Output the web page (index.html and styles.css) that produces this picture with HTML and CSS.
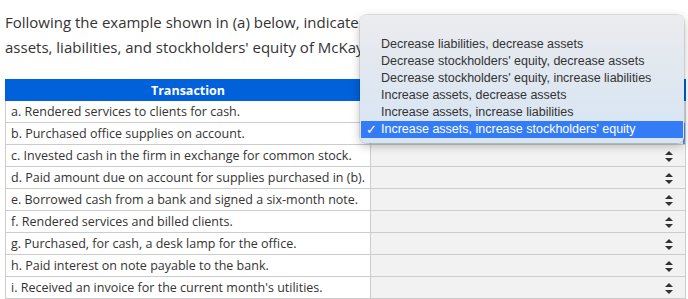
FILE: index.html
```html
<!DOCTYPE html>
<html>
<head>
<meta charset="utf-8">
<link rel="stylesheet" href="styles.css">
</head>
<body>
<div class="page">
  <p class="intro">Following the example shown in (a) below, indicate the effects of the listed transactions on the<br>assets, liabilities, and stockholders' equity of McKay Company.</p>
  <table class="grid">
    <thead>
      <tr><th class="col-t">Transaction</th><th class="col-e"></th></tr>
    </thead>
    <tbody>
      <tr><td>a. Rendered services to clients for cash.</td><td class="sel"><svg class="arr" viewBox="0 0 8 11"><path d="M4 0L8 4H0Z M0 7H8L4 11Z"/></svg></td></tr>
      <tr><td>b. Purchased office supplies on account.</td><td class="sel focus"><svg class="arr" viewBox="0 0 8 11"><path d="M4 0L8 4H0Z M0 7H8L4 11Z"/></svg></td></tr>
      <tr><td>c. Invested cash in the firm in exchange for common stock.</td><td class="sel"><svg class="arr" viewBox="0 0 8 11"><path d="M4 0L8 4H0Z M0 7H8L4 11Z"/></svg></td></tr>
      <tr><td>d. Paid amount due on account for supplies purchased in (b).</td><td class="sel"><svg class="arr" viewBox="0 0 8 11"><path d="M4 0L8 4H0Z M0 7H8L4 11Z"/></svg></td></tr>
      <tr><td>e. Borrowed cash from a bank and signed a six-month note.</td><td class="sel"><svg class="arr" viewBox="0 0 8 11"><path d="M4 0L8 4H0Z M0 7H8L4 11Z"/></svg></td></tr>
      <tr><td>f. Rendered services and billed clients.</td><td class="sel"><svg class="arr" viewBox="0 0 8 11"><path d="M4 0L8 4H0Z M0 7H8L4 11Z"/></svg></td></tr>
      <tr><td>g. Purchased, for cash, a desk lamp for the office.</td><td class="sel"><svg class="arr" viewBox="0 0 8 11"><path d="M4 0L8 4H0Z M0 7H8L4 11Z"/></svg></td></tr>
      <tr><td>h. Paid interest on note payable to the bank.</td><td class="sel"><svg class="arr" viewBox="0 0 8 11"><path d="M4 0L8 4H0Z M0 7H8L4 11Z"/></svg></td></tr>
      <tr><td>i. Received an invoice for the current month's utilities.</td><td class="sel"><svg class="arr" viewBox="0 0 8 11"><path d="M4 0L8 4H0Z M0 7H8L4 11Z"/></svg></td></tr>
    </tbody>
  </table>
  <ul class="popup">
    <li>Decrease liabilities, decrease assets</li>
    <li>Decrease stockholders' equity, decrease assets</li>
    <li>Decrease stockholders' equity, increase liabilities</li>
    <li>Increase assets, decrease assets</li>
    <li>Increase assets, increase liabilities</li>
    <li class="chosen"><span class="check">✓</span>Increase assets, increase stockholders' equity</li>
  </ul>
</div>
</body>
</html>
```
FILE: styles.css
```css
html, body {
  margin: 0;
  padding: 0;
  background: #ffffff;
}
.page {
  position: relative;
  width: 688px;
  height: 299px;
  overflow: hidden;
  padding: 0 3px 0 5px;
  box-sizing: border-box;
  font-family: "Open Sans", sans-serif;
  color: #333333;
}
.intro {
  margin: 0;
  padding-top: 10px;
  width: 683px;
  font-size: 15px;
  line-height: 25px;
  height: 79px;
  box-sizing: border-box;
  white-space: nowrap;
  overflow: hidden;
}
.grid {
  border-collapse: collapse;
  width: 681px;
  table-layout: fixed;
  font-size: 12.5px;
}
.grid th {
  background: #0061db;
  color: #ffffff;
  font-weight: 700;
  height: 20px;
  padding: 0;
  font-size: 12.5px;
  border: 1px solid #0061db;
}
.col-t { width: 364px; }
.grid td {
  border: 1px solid #cccccc;
  height: 21px;
  padding: 0 0 0 5px;
  white-space: nowrap;
  overflow: hidden;
  line-height: 20px;
}
.grid td.sel {
  background: #f2f2f2;
  position: relative;
  padding: 0;
}
.arr {
  position: absolute;
  right: 12px;
  top: 6px;
  width: 8px;
  height: 11px;
  fill: #333333;
}
.focus {
  box-shadow: inset -2px 0 0 #5b93ea;
}
.popup {
  position: absolute;
  left: 360px;
  top: 15px;
  width: 324px;
  height: 128px;
  box-sizing: border-box;
  margin: 0;
  padding: 21px 1px 0 1px;
  list-style: none;
  border-radius: 6px;
  background: linear-gradient(#ececef 0%, #e2e8f0 40%, #d6e5f4 100%);
  box-shadow: 0 0 0 0.5px rgba(0,0,0,0.18), 0 3px 10px rgba(0,0,0,0.25);
  font-family: "Liberation Sans", Arial, sans-serif;
  font-size: 12.5px;
  color: #333333;
}
.popup li {
  height: 17px;
  line-height: 17px;
  padding-left: 20px;
  position: relative;
  white-space: nowrap;
}
.popup li.chosen {
  background: #347cf6;
  color: #ffffff;
}
.check {
  position: absolute;
  left: 5px;
  top: 0;
  font-size: 13px;
}
```
